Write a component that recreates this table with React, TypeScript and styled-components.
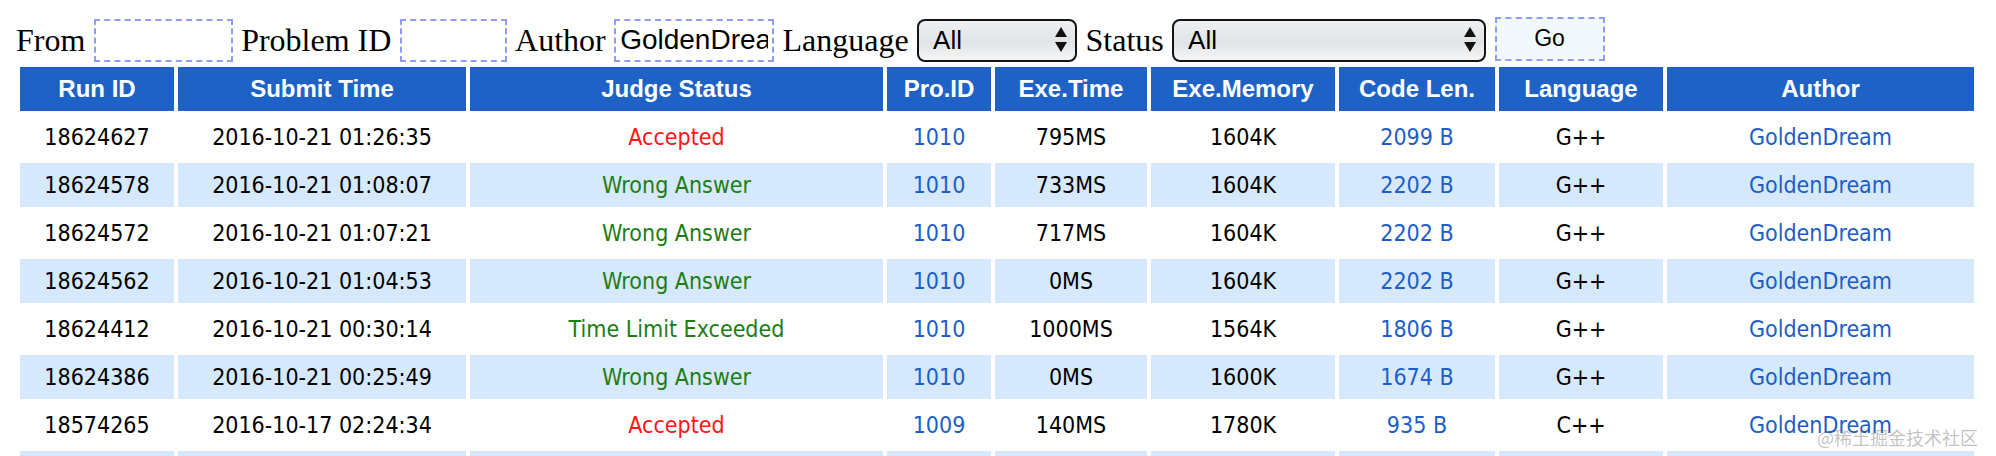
import React from 'react';
import styled, { createGlobalStyle } from 'styled-components';

const GlobalStyle = createGlobalStyle`
  html, body { margin: 0; padding: 0; background: #ffffff; }
  body { width: 1996px; height: 456px; overflow: hidden; }
`;

const Page = styled.div`
  position: relative;
  box-sizing: border-box;
  width: 1996px;
  height: 456px;
  padding: 17px 0 0 16px;
  overflow: hidden;
`;

const FilterBar = styled.form`
  display: flex;
  align-items: center;
  gap: 8.4px;
  height: 46px;
  margin: 0;
`;

const Label = styled.label`
  font-family: "Liberation Serif", "Times New Roman", serif;
  font-size: 32px;
  color: #000;
  line-height: 1;
  white-space: nowrap;
`;

const TextInput = styled.input<{ $w: number }>`
  box-sizing: border-box;
  width: ${(p) => p.$w}px;
  height: 43px;
  border: 2px dashed #8e9ef6;
  background: #fff;
  padding: 0 4px;
  font-family: "Liberation Sans", Arial, sans-serif;
  font-size: 28px;
  color: #000;
  outline: none;
`;

const SelectWrap = styled.div<{ $w: number }>`
  position: relative;
  width: ${(p) => p.$w}px;
  height: 43px;
`;

const Select = styled.select`
  appearance: none;
  -webkit-appearance: none;
  box-sizing: border-box;
  width: 100%;
  height: 100%;
  border: 2px solid #141414;
  border-radius: 8px;
  background: linear-gradient(to bottom, #eef0f2 0%, #e1e4e7 55%, #f4f5f6 100%);
  padding: 0 30px 0 14px;
  font-family: "Liberation Sans", Arial, sans-serif;
  font-size: 26px;
  color: #000;
  outline: none;
`;

const Arrows = styled.svg`
  position: absolute;
  right: 10px;
  top: 8px;
  pointer-events: none;
`;

const GoButton = styled.button`
  box-sizing: border-box;
  width: 110px;
  height: 44px;
  margin-bottom: 3px;
  border: 2px dashed #8e9ef6;
  background: #f2f9fd;
  font-family: "Liberation Sans", Arial, sans-serif;
  font-size: 23px;
  color: #000;
  padding: 0;
`;

const Table = styled.table`
  width: 1962px;
  table-layout: fixed;
  border-collapse: separate;
  border-spacing: 4px;
`;

const HeadCell = styled.th`
  height: 44px;
  padding: 0;
  background: #1f62c5;
  color: #fff;
  font-family: "Liberation Sans", Arial, sans-serif;
  font-weight: bold;
  font-size: 24px;
  text-align: center;
`;

const Row = styled.tr<{ $alt: boolean }>`
  background: ${(p) => (p.$alt ? '#d6e8fc' : 'transparent')};
`;

const Cell = styled.td<{ $tone?: 'red' | 'green' | 'blue' }>`
  height: 44px;
  padding: 0;
  text-align: center;
  font-family: "DejaVu Sans Condensed", "DejaVu Sans", Tahoma, sans-serif;
  font-stretch: condensed;
  font-size: 23px;
  white-space: nowrap;
  color: ${(p) =>
    p.$tone === 'red' ? '#ff1616' : p.$tone === 'green' ? '#1d7d15' : p.$tone === 'blue' ? '#1d5ec8' : '#000'};
`;

const Watermark = styled.div`
  position: absolute;
  right: 18px;
  bottom: 6px;
  font-family: "Noto Sans CJK SC", sans-serif;
  font-size: 18px;
  color: rgba(120, 120, 120, 0.45);
  pointer-events: none;
`;

const widths = [154, 288, 413, 104, 152, 184, 156, 164, 307];
const heads = ['Run ID', 'Submit Time', 'Judge Status', 'Pro.ID', 'Exe.Time', 'Exe.Memory', 'Code Len.', 'Language', 'Author'];

type Rec = { id: string; time: string; status: string; pid: string; exe: string; mem: string; len: string; lang: string };

const rows: Rec[] = [
  { id: '18624627', time: '2016-10-21 01:26:35', status: 'Accepted', pid: '1010', exe: '795MS', mem: '1604K', len: '2099 B', lang: 'G++' },
  { id: '18624578', time: '2016-10-21 01:08:07', status: 'Wrong Answer', pid: '1010', exe: '733MS', mem: '1604K', len: '2202 B', lang: 'G++' },
  { id: '18624572', time: '2016-10-21 01:07:21', status: 'Wrong Answer', pid: '1010', exe: '717MS', mem: '1604K', len: '2202 B', lang: 'G++' },
  { id: '18624562', time: '2016-10-21 01:04:53', status: 'Wrong Answer', pid: '1010', exe: '0MS', mem: '1604K', len: '2202 B', lang: 'G++' },
  { id: '18624412', time: '2016-10-21 00:30:14', status: 'Time Limit Exceeded', pid: '1010', exe: '1000MS', mem: '1564K', len: '1806 B', lang: 'G++' },
  { id: '18624386', time: '2016-10-21 00:25:49', status: 'Wrong Answer', pid: '1010', exe: '0MS', mem: '1600K', len: '1674 B', lang: 'G++' },
  { id: '18574265', time: '2016-10-17 02:24:34', status: 'Accepted', pid: '1009', exe: '140MS', mem: '1780K', len: '935 B', lang: 'C++' },
  { id: '18574201', time: '2016-10-17 02:10:12', status: 'Wrong Answer', pid: '1009', exe: '125MS', mem: '1780K', len: '930 B', lang: 'C++' },
];

const ArrowIcon = () => (
  <Arrows width="12" height="26" viewBox="0 0 12 26">
    <polygon points="6,0 12,10 0,10" fill="#111" />
    <polygon points="0,15 12,15 6,25" fill="#111" />
  </Arrows>
);

export default function App() {
  return (
    <Page>
      <GlobalStyle />
      <FilterBar onSubmit={(e) => e.preventDefault()}>
        <Label>From</Label>
        <TextInput $w={139} />
        <Label>Problem ID</Label>
        <TextInput $w={107} />
        <Label>Author</Label>
        <TextInput $w={160} defaultValue="GoldenDream" />
        <Label>Language</Label>
        <SelectWrap $w={160}>
          <Select defaultValue="All">
            <option>All</option>
          </Select>
          <ArrowIcon />
        </SelectWrap>
        <Label>Status</Label>
        <SelectWrap $w={314}>
          <Select defaultValue="All">
            <option>All</option>
          </Select>
          <ArrowIcon />
        </SelectWrap>
        <GoButton type="submit">Go</GoButton>
      </FilterBar>
      <Table>
        <colgroup>
          {widths.map((w, i) => (
            <col key={i} style={{ width: w }} />
          ))}
        </colgroup>
        <thead>
          <tr>
            {heads.map((h) => (
              <HeadCell key={h}>{h}</HeadCell>
            ))}
          </tr>
        </thead>
        <tbody>
          {rows.map((r, i) => (
            <Row key={r.id} $alt={i % 2 === 1}>
              <Cell>{r.id}</Cell>
              <Cell>{r.time}</Cell>
              <Cell $tone={r.status === 'Accepted' ? 'red' : 'green'}>{r.status}</Cell>
              <Cell $tone="blue">{r.pid}</Cell>
              <Cell>{r.exe}</Cell>
              <Cell>{r.mem}</Cell>
              <Cell $tone="blue">{r.len}</Cell>
              <Cell>{r.lang}</Cell>
              <Cell $tone="blue">GoldenDream</Cell>
            </Row>
          ))}
        </tbody>
      </Table>
      <Watermark>@稀土掘金技术社区</Watermark>
    </Page>
  );
}
